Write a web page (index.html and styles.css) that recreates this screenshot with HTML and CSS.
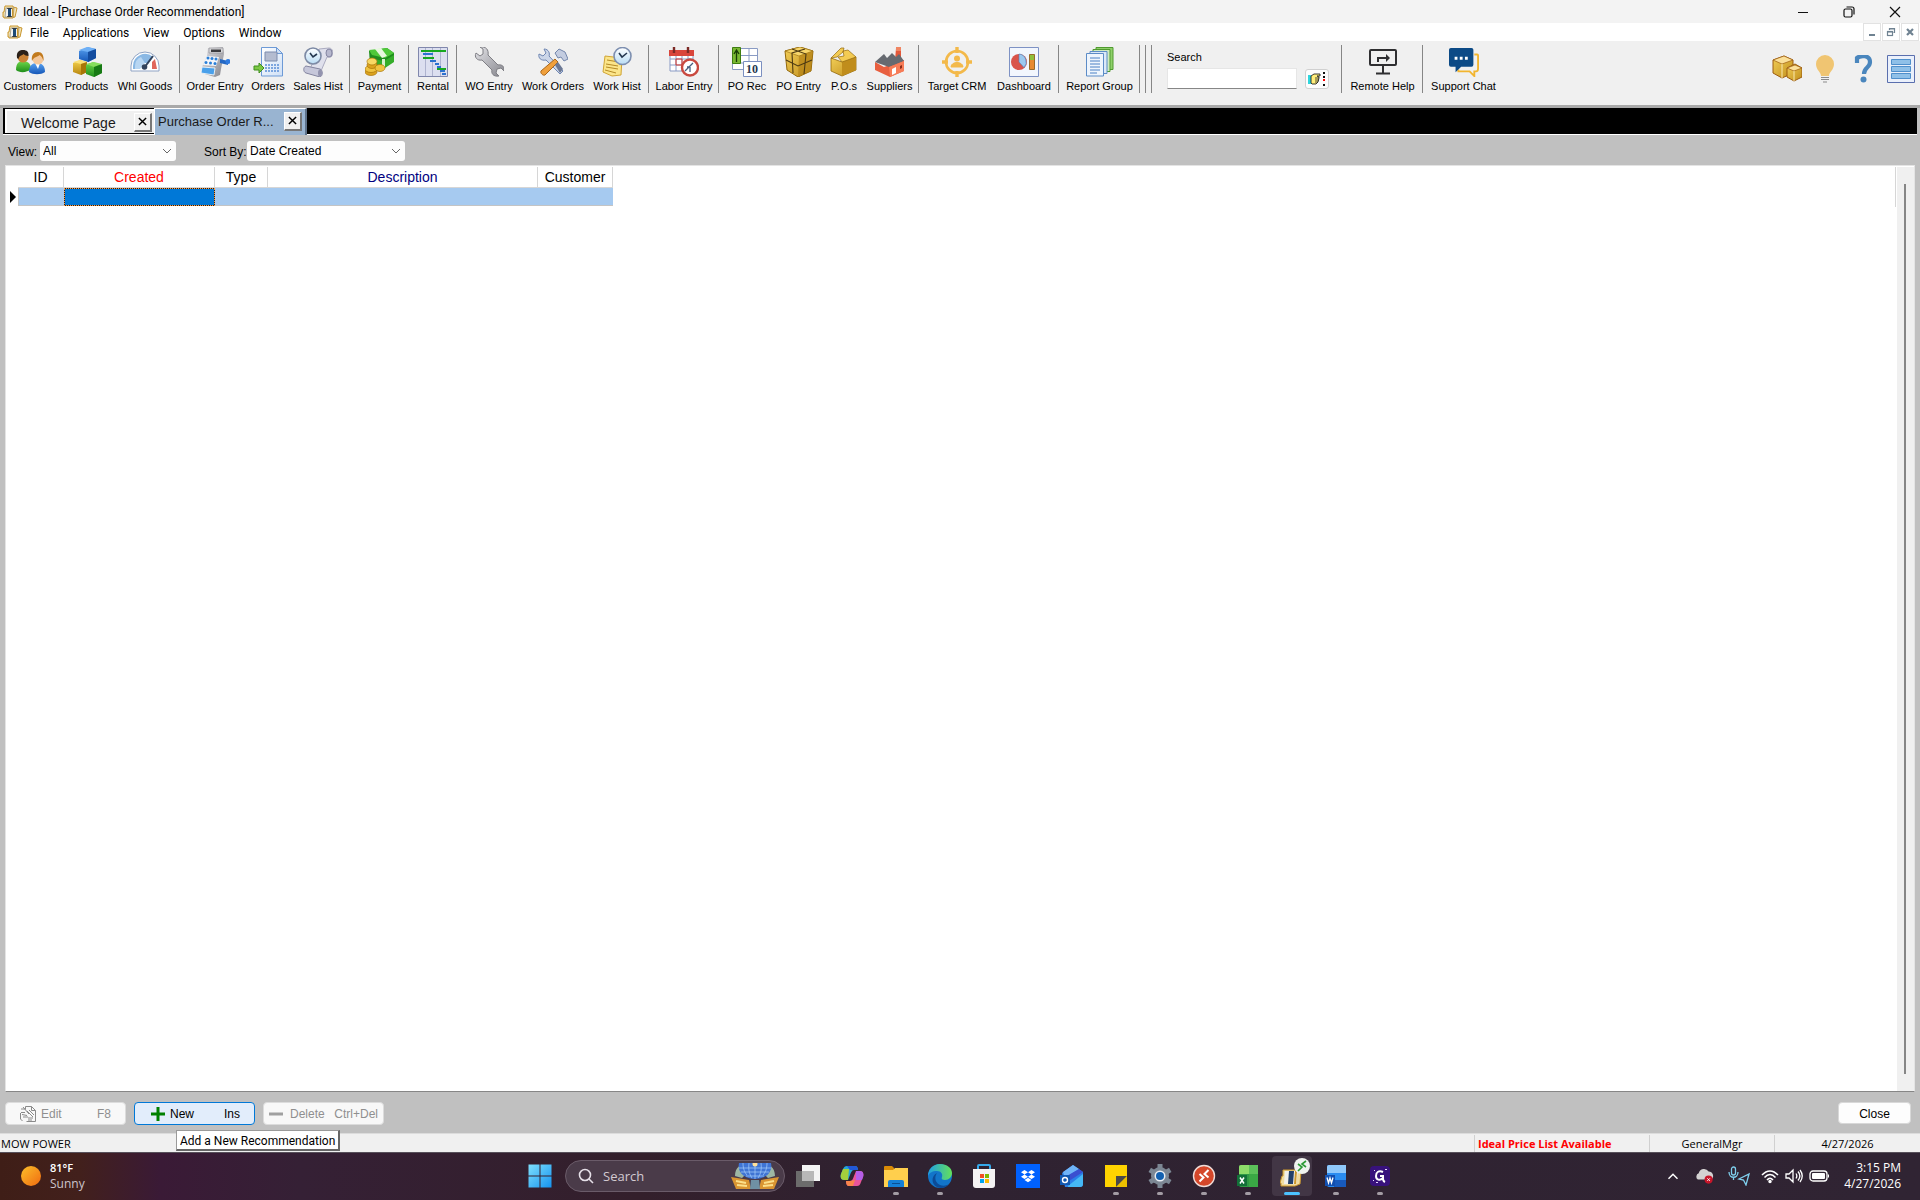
FILE: index.html
```html
<!DOCTYPE html>
<html lang="en">
<head>
<meta charset="utf-8">
<title>Ideal - [Purchase Order Recommendation]</title>
<link rel="stylesheet" href="styles.css">
</head>
<body>
<svg class="defs" aria-hidden="true">
  <defs>
    <linearGradient id="gBlue" x1="0" y1="0" x2="0" y2="1"><stop offset="0" stop-color="#5aa2f0"/><stop offset="1" stop-color="#1557b8"/></linearGradient>
    <linearGradient id="gGreen" x1="0" y1="0" x2="0" y2="1"><stop offset="0" stop-color="#6fd84a"/><stop offset="1" stop-color="#1f8f1c"/></linearGradient>
    <linearGradient id="gGold" x1="0" y1="0" x2="0" y2="1"><stop offset="0" stop-color="#f6d450"/><stop offset="1" stop-color="#b8860f"/></linearGradient>
    <linearGradient id="gSteel" x1="0" y1="0" x2="1" y2="1"><stop offset="0" stop-color="#e4e4e8"/><stop offset="1" stop-color="#85858c"/></linearGradient>
    <linearGradient id="gPage" x1="0" y1="0" x2="1" y2="1"><stop offset="0" stop-color="#ffffff"/><stop offset="1" stop-color="#cfe0f6"/></linearGradient>
    <linearGradient id="gBox" x1="0" y1="0" x2="1" y2="1"><stop offset="0" stop-color="#f3cf58"/><stop offset="1" stop-color="#c08e1c"/></linearGradient>
    <linearGradient id="gSun" x1="0" y1="0" x2="1" y2="1"><stop offset="0" stop-color="#fbc02a"/><stop offset="1" stop-color="#f06a10"/></linearGradient>
    <linearGradient id="gWin" x1="0" y1="0" x2="1" y2="1"><stop offset="0" stop-color="#7fe0fd"/><stop offset="1" stop-color="#1593ef"/></linearGradient>
    <linearGradient id="gEdge" x1="0" y1="0" x2="1" y2="0"><stop offset="0" stop-color="#1f9fe4"/><stop offset="1" stop-color="#63e05a"/></linearGradient>
    <linearGradient id="gFace" x1="0" y1="0" x2="0" y2="1"><stop offset="0" stop-color="#ffffff"/><stop offset="1" stop-color="#b9dcf4"/></linearGradient>
    <symbol id="ideal" viewBox="0 0 16 16">
      <path d="M3 2h8v1l4 1-2 9-2 .5V14H2v-1H1V8h1z" fill="#f3e3b4" stroke="#c8962e"/>
      <path d="M4 4h8l-1 9H3z" fill="#f4f4f0" stroke="#8d8a80" stroke-width=".7"/>
      <path d="M6 4h3v9H6z" fill="#1d4a76"/><path d="M10 4h1.500v9H10z" fill="#c8962e"/>
      <path d="M5 4.500h5M5 12.500h5" stroke="#333" stroke-width=".8"/>
    </symbol>
  </defs>
</svg>

<header class="titlebar">
  <svg class="app-icon" viewBox="0 0 16 16"><use href="#ideal"/></svg>
  <h1>Ideal - [Purchase Order Recommendation]</h1>
  <div class="window-controls">
    <button type="button" aria-label="Minimize"><svg viewBox="0 0 12 12"><path d="M1 6.500h10" stroke="#111"/></svg></button>
    <button type="button" aria-label="Restore"><svg viewBox="0 0 12 12" fill="none" stroke="#111" stroke-width="1.200"><rect x="1" y="3" width="8" height="8" rx="1.500"/><path d="M3.500 1h5.500a2 2 0 0 1 2 2v5.500"/></svg></button>
    <button type="button" aria-label="Close window"><svg viewBox="0 0 12 12"><path d="M1 1l10 10M11 1L1 11" stroke="#111" stroke-width="1.200"/></svg></button>
  </div>
</header>

<nav class="menubar" aria-label="Main menu">
  <svg class="app-icon" viewBox="0 0 16 16"><use href="#ideal"/></svg>
  <button type="button">File</button>
  <button type="button">Applications</button>
  <button type="button">View</button>
  <button type="button">Options</button>
  <button type="button">Window</button>
  <div class="child-controls">
    <button type="button" aria-label="Minimize document"><svg viewBox="0 0 10 10"><path d="M2 8h6" stroke="#6f8291" stroke-width="2"/></svg></button>
    <button type="button" aria-label="Restore document"><svg viewBox="0 0 10 10" fill="none" stroke="#6f8291" stroke-width="1.200"><rect x="1.500" y="4.500" width="5" height="4"/><path d="M1.500 5h5M3.500 3V1.500h5v4H7.500M3.500 2h5"/></svg></button>
    <button type="button" aria-label="Close document"><svg viewBox="0 0 10 10"><path d="M2 2l6 6M8 2L2 8" stroke="#6f8291" stroke-width="2.200"/></svg></button>
  </div>
</nav>

<div class="toolbar" role="toolbar" aria-label="Applications">
  <button type="button" class="tool w60"><svg viewBox="0 0 30 30">
    <path d="M1 23c0-7 3-9 7-9s8 2 8 8c-4 4-12 4-15 1z" fill="url(#gGreen)"/><circle cx="8" cy="10" r="5.500" fill="#c98235"/><path d="M2 11c-1-7 3-8 6-8 4 0 6 2 5.500 6-2 0-4-1-5-2-2 2-4 1-5 5z" fill="#2b2119"/>
    <path d="M14 25c0-6 3-9 8-9s8 3 8 9c-4 3-12 3-16 0z" fill="url(#gBlue)"/><path d="M20 16h5l-2 6z" fill="#fff"/><circle cx="23" cy="12" r="5.500" fill="#f4c79a"/><path d="M17 14c-1-6 2-9 6-9s6 3 5.500 9c-1-3-2-5-4-6-2 2-6 2-7.500 6z" fill="#c27a1d"/></svg><span>Customers</span></button>
  <button type="button" class="tool w53"><svg viewBox="0 0 30 30">
    <path d="M7 4l9-4 8 2v9l-8 4-9-3z" fill="url(#gBlue)"/><path d="M7 3l8-3 9 2-8 3z" fill="#6fb0f6"/><path d="M16 5l8-3v9l-8 4z" fill="#134c9f"/>
    <path d="M1 16l7-3 7 2v10l-6 3-8-3z" fill="url(#gGold)"/><path d="M1 15l7-2 7 2-6 2z" fill="#fbe27a"/><path d="M9 17l6-2v10l-6 3z" fill="#a87608"/>
    <path d="M14 18l7-3 9 3v8l-8 4-8-3z" fill="url(#gGreen)"/><path d="M14 17l8-2 8 2-8 3z" fill="#86dd5c"/><path d="M22 20l8-3v9l-8 4z" fill="#177a14"/></svg><span>Products</span></button>
  <button type="button" class="tool w64"><svg viewBox="0 0 30 30">
    <path d="M1 24v-5a14 14 0 0 1 28 0v5z" fill="#fff" stroke="#8fa3c4"/><path d="M3 22v-3a12 12 0 0 1 20-9l-5 7a5 5 0 0 0-8 3v2z" fill="#8ab8e4"/><path d="M5 22v-3a10 10 0 0 1 6-9l4 6-5 6z" fill="#b8d6f2"/><path d="M22 15l3-3 2 10h-5z" fill="#e0665c"/><path d="M23 9L14 21" stroke="#33435c" stroke-width="2"/><circle cx="14.500" cy="20" r="2.800" fill="#33435c"/></svg><span>Whl Goods</span></button>
  <hr>
  <button type="button" class="tool w64"><svg viewBox="0 0 30 30">
    <path d="M8 1l15-1 1 7-3 15-1 6-5 2L1 26l1-6 5-11z" fill="url(#gSteel)"/><path d="M9 1h14v5H9z" fill="#d7d7da" stroke="#8b8b90" stroke-width=".6"/><path d="M11 2.500h10v2.500H11z" fill="#3b3b3f"/><path d="M7 9l12 1-3 9-13-1z" fill="#f4f6fa"/><g fill="#2a7fd8"><circle cx="8" cy="11" r="1.500"/><circle cx="12" cy="11.500" r="1.500"/><circle cx="16" cy="12" r="1.500"/><circle cx="6" cy="15.500" r="1.500"/><circle cx="10.500" cy="16" r="1.500"/><circle cx="15" cy="16.500" r="1.500"/></g><path d="M2 20l13 1-1 7-13-2z" fill="#4aa0ea" stroke="#fff" stroke-width=".8"/><path d="M20 12l8 2v4l-8-2z" fill="#2468c4"/><circle cx="28" cy="14.500" r="2.500" fill="#2f7be0"/></svg><span>Order Entry</span></button>
  <button type="button" class="tool w42"><svg viewBox="0 0 30 30">
    <path d="M8.500.5h15l6 6v22.500h-21z" fill="url(#gPage)" stroke="#6d9ad6"/><path d="M23.500.5v6h6z" fill="#cfe0f6" stroke="#6d9ad6"/><path d="M12 5h12v9H12z" fill="#b4bcd0" stroke="#7c8cae"/><path d="M12 18h14M12 21h14M12 24h14" stroke="#5b8fd6" stroke-width="1.400" stroke-dasharray="2 1"/><path d="M1 19h5v-3l5 5-5 5v-3H1z" fill="#7cc844" stroke="#3f8f1d"/></svg><span>Orders</span></button>
  <button type="button" class="tool w58"><svg viewBox="0 0 30 30">
    <path d="M16 2l10-1c4 0 5 6 2 9h-4l-6 14H6z" fill="#dfe0ec" stroke="#9a9bb4" stroke-width=".8"/><ellipse cx="26" cy="6" rx="3" ry="4" fill="#b7b8ce" stroke="#8485a2"/><path d="M3 19l14 3c3 1 3 7 0 8L3 26c-3-1-3-6 0-7z" fill="#c6c7da" stroke="#83849f"/><ellipse cx="17" cy="26" rx="2" ry="3.500" fill="#9293ae"/><circle cx="10" cy="9" r="8" fill="url(#gFace)" stroke="#7d8aa5" stroke-width="1.600"/><path d="M7 6l3 4 4-3" fill="none" stroke="#24364e" stroke-width="1.600"/></svg><span>Sales Hist</span></button>
  <hr>
  <button type="button" class="tool w53"><svg viewBox="0 0 30 30">
    <path d="M4 4l18-3 7 5v8l-9 6-15-3z" fill="#1f8d1e"/><path d="M4 3l18-2 7 5-9 5-13-3z" fill="#4fc83a"/><path d="M10 2l6-1 6 8-5 2z" fill="#e8f7df"/><path d="M9 12l10 2 10-6v7l-9 6-11-4z" fill="#35ad2a"/><path d="M17 12h3v8h-3z" fill="#d8f0cd"/><g stroke="#a87408" stroke-width=".7"><ellipse cx="6" cy="25" rx="6" ry="3.500" fill="#dba21d"/><ellipse cx="6" cy="22" rx="6" ry="3.500" fill="#f0c340"/><ellipse cx="7" cy="18" rx="5" ry="3.500" fill="#dba21d"/><ellipse cx="7" cy="14.500" rx="5" ry="3.500" fill="#f8d864"/><ellipse cx="15" cy="21" rx="5" ry="3.500" fill="#f0c340"/></g></svg><span>Payment</span></button>
  <hr>
  <button type="button" class="tool w42"><svg viewBox="0 0 30 30">
    <path d="M.5.5h29v29H.5z" fill="#dcdff0" stroke="#8087ac"/><path d="M7.500 1v28M14.500 1v28M22.500 1v28" stroke="#aeb3cf"/><g stroke-width="2"><path d="M3 4h25M5 11h11M19 22h9" stroke="#17a821"/><path d="M5 7h10M12 14h6M17 17h4M19 20h4M22 24h5M24 27h4" stroke="#2c72cf"/></g></svg><span>Rental</span></button>
  <hr>
  <button type="button" class="tool w58"><svg viewBox="0 0 30 30">
    <path d="M2 6l4 3 3-2V2L6 0c6-1 9 3 8 8l10 10c4-1 7 2 6 6l-3-3-4 1-1 4 3 3c-6 1-8-3-7-6L8 13C3 14 0 10 2 6z" fill="url(#gSteel)" stroke="#7e7e84"/></svg><span>WO Entry</span></button>
  <button type="button" class="tool w70"><svg viewBox="0 0 30 30">
    <path d="M17 6l4-4 6 3 3 7-4 2-3-4-3 1z" fill="#c3cce0" stroke="#7386ab"/><path d="M1 7l4 2 3-3-2-4c5 0 6 5 5 7l14 15-3 3L8 13c-5 1-8-2-7-6z" fill="#ccd6e8" stroke="#6f86b2"/><path d="M17 12l3 3L7 28c-2 1-5-2-4-4z" fill="#f0a03c" stroke="#a9661a"/><path d="M17 18l3-3 5 7-3 4z" fill="#6b7894"/></svg><span>Work Orders</span></button>
  <button type="button" class="tool w58"><svg viewBox="0 0 30 30">
    <path d="M3 9l17 2-1 17-9 1-9-4z" fill="#fbe58a" stroke="#d0a536"/><path d="M5 13l12 2M4 17l12 2M4 20l12 2M3 23l11 3" stroke="#b58a24"/><circle cx="20.500" cy="9" r="8.500" fill="url(#gFace)" stroke="#7d8fb0" stroke-width="1.600"/><path d="M17 6l3 4 5-4" fill="none" stroke="#24364e" stroke-width="1.600"/></svg><span>Work Hist</span></button>
  <hr>
  <button type="button" class="tool w64"><svg viewBox="0 0 30 30">
    <path d="M1 6h23v18H1z" fill="#fff" stroke="#8a9bc4"/><path d="M1 12h23M1 18h23M7 8v16M13 8v16M19 8v16" stroke="#8a9bc4"/><path d="M7 12h6v6H7z" fill="none" stroke="#d8382f"/><path d="M0 3h25v6H0z" fill="#d9463c"/><path d="M5 0v6M19 0v6" stroke="#7c2a26" stroke-width="2.400"/><circle cx="21" cy="20.500" r="8" fill="#fff" stroke="#c9493f" stroke-width="2.400"/><path d="M16 24l8-8M21 20v5M21 20h-3" stroke="#47607f" stroke-width="1.300"/></svg><span>Labor Entry</span></button>
  <hr>
  <button type="button" class="tool w50"><svg viewBox="0 0 30 30">
    <path d="M.5 1.500h25v21H.5z" fill="#fff" stroke="#8a9bc4"/><path d="M9 8.500h17M1 16h24M17 2v20" stroke="#8a9bc4"/><path d="M.5.500h8v16h-8z" fill="#79b833" stroke="#3f7e12"/><path d="M4.500 15V4M2 7l2.500-4L7 7" fill="none" stroke="#183b06" stroke-width="1.300"/><path d="M11.500 14.500h18v15h-18z" fill="#fff" stroke="#7b8fc0"/><text x="14" y="26" class="calendar-day">10</text></svg><span>PO Rec</span></button>
  <button type="button" class="tool w53"><svg viewBox="0 0 30 30">
    <path d="M1 4l15-4 13 4-2 20-13 6L3 23z" fill="url(#gBox)" stroke="#93680b"/><path d="M1 4l14 5 14-5-13-4z" fill="#f7d66b" stroke="#93680b" stroke-width=".6"/><path d="M15 9l-1 21 13-6 2-20z" fill="#b58317" opacity=".7"/><path d="M8 2l14 5-2 20M21 2L8 6l1 20M2 13l12 6 14-6" fill="none" stroke="#4d3a12" stroke-width="1.100"/></svg><span>PO Entry</span></button>
  <button type="button" class="tool w38"><svg viewBox="0 0 30 30">
    <path d="M2 11l11 4 14-5v13l-14 6-11-5z" fill="url(#gBox)" stroke="#93680b" stroke-width=".8"/><path d="M13 15l14-5v13l-14 6z" fill="#c08d1c"/><path d="M2 11L12 1h3l-1 4-6 5zM14 4l5-1 8 7-14 5-4-5 6-1z" fill="#f3cb53" stroke="#93680b" stroke-width=".7"/></svg><span>P.O.s</span></button>
  <button type="button" class="tool w53"><svg viewBox="0 0 30 30">
    <path d="M21 1h5v13h-6z" fill="#e3583a"/><path d="M21 0h5v4h-5z" fill="#f08562"/><path d="M0 15l9 5 20-7v11l-14 6-15-7z" fill="#e85f3f"/><path d="M0 15l9-8 3 4 5-5 4 4 3-3 5 7-15 6z" fill="#666a70"/><path d="M14 20l15-6v10l-14 6z" fill="#f77c57"/><path d="M17 22l4-2v6l-4 2z" fill="#fff"/><path d="M25 19l2-1v3l-2 1z" fill="#8d2c18"/></svg><span>Suppliers</span></button>
  <hr>
  <button type="button" class="tool w70"><svg viewBox="0 0 30 30" fill="none" stroke="#f3b94a">
    <circle cx="15" cy="15" r="11" stroke-width="2.600"/><path d="M15 0v6M15 24v6M0 15h6M24 15h6" stroke-width="3.400"/><circle cx="15" cy="11.500" r="3" fill="#f3b94a" stroke="none"/><path d="M9 20c0-6 12-6 12 0z" fill="#f3b94a"/></svg><span>Target CRM</span></button>
  <button type="button" class="tool w64"><svg viewBox="0 0 30 30">
    <path d="M.5.5h29v29H.5z" fill="#f2f6fd" stroke="#7e92c4"/><circle cx="10" cy="15" r="8" fill="#d9534a"/><path d="M10 15V7a8 8 0 0 1 5 13.500z" fill="#9cc8ef" stroke="#4a80bd" stroke-width=".6"/><path d="M20.500 7.500h5v15h-5z" fill="#e88a32" stroke="#9a6a2a"/><path d="M21 8h4v5h-4z" fill="#8fbf3c"/></svg><span>Dashboard</span></button>
  <hr>
  <button type="button" class="tool w75"><svg viewBox="0 0 30 30">
    <g stroke="#4f9a2f"><path d="M11 .5h17v22H11z" fill="#8fd06a"/><path d="M8 2.500h17v22H8z" fill="#cfeac0"/></g><path d="M5 4.500h17v22H5z" fill="#dce9f8" stroke="#5c8cc7"/><path d="M1.500 6.500h17v22.500h-17z" fill="#eef5fd" stroke="#5c8cc7"/><path d="M5 11h10M5 14h10M5 17h10M5 20h10M5 23h10M5 26h7" stroke="#4a80c4"/></svg><span>Report Group</span></button>
  <hr><hr><hr>
  <form class="quick-search">
    <label for="quick">Search</label>
    <input id="quick" type="text">
    <button type="button" aria-label="Go"><svg viewBox="0 0 18 14"><path d="M0 3h3v9H0z" fill="#2fd6dd"/><path d="M3 4l3-2h6v2h-3l2 1v1l-1 4-2 2H4L3 11z" fill="#ffee7a" stroke="#222" stroke-width=".9"/><path d="M7 6h4M7 8h4M7 10h3" stroke="#222" stroke-width=".8"/><path d="M15 0h2v2h-2zM15 4h2v2h-2zM15 12h2v2h-2z" fill="#111"/><path d="M15 7h2v2h-2z" fill="#f00"/></svg></button>
  </form>
  <hr>
  <button type="button" class="tool w75"><svg viewBox="0 0 30 30" fill="none" stroke="#2f2f31" stroke-width="2">
    <rect x="2" y="3" width="26" height="15" rx="1"/><path d="M15 18v8M8 26.500h14M10 15V11h9" /><path d="M18 7l4 4-4 4z" fill="#2f2f31" stroke="none"/></svg><span>Remote Help</span></button>
  <hr>
  <button type="button" class="tool w75"><svg viewBox="0 0 32 30">
    <path d="M27 7h3c1 0 1 0 1 1v14c0 2-1 3-2 3h-2v5l-5-5H10v-2" fill="none" stroke="#f2b52f" stroke-width="2"/><path d="M2 0h22q2 0 2 2v16q0 2-2 2H13l-6 6v-6H2q-2 0-2-2V2q0-2 2-2z" fill="#0c4a86"/><path d="M6 9.500h3v3H6zM11.500 9.500h3v3h-3zM17 9.500h3v3h-3z" fill="#fff"/></svg><span>Support Chat</span></button>
  <div class="shortcuts">
    <button type="button" aria-label="Packages"><svg viewBox="0 0 30 28"><path d="M1 5l11-4 9 4v13l-11 5-9-5z" fill="url(#gBox)" stroke="#9c5c10"/><path d="M1 5l9 4 11-4-9-4z" fill="#fbe09a" stroke="#9c5c10" stroke-width=".7"/><path d="M10 9v14" stroke="#fbe9b0"/><path d="M15 13l8-4 7 4v9l-8 4-7-4z" fill="url(#gBox)" stroke="#9c5c10"/><path d="M15 13l7 3 8-3-7-3z" fill="#fbe09a" stroke="#9c5c10" stroke-width=".7"/><path d="M22 16v10" stroke="#fbe9b0"/></svg></button>
    <button type="button" aria-label="Tips"><svg viewBox="0 0 30 28"><path d="M11 21c0-4-5-6-5-12a9 9 0 0 1 18 0c0 6-5 8-5 12z" fill="#f0c572"/><path d="M11 22.500h8M11 24.500h8M13 27h4" stroke="#8a8a8a" stroke-width="1.200"/></svg></button>
    <button type="button" aria-label="Help"><svg viewBox="0 0 30 28"><path d="M9 8V3c4-3 13-3 13 4 0 6-6 5-6 12" fill="none" stroke="#4a86bd" stroke-width="4.200"/><circle cx="15.500" cy="24.500" r="3" fill="#4a86bd"/></svg></button>
    <button type="button" aria-label="List"><svg viewBox="0 0 28 28"><path d="M.5.5h27v27H.5z" fill="#eaf0fb" stroke="#5a6fae"/><g fill="#8fc0e8" stroke="#4f8fcb"><path d="M4.500 4.500h19v5h-19zM4.500 11.500h19v5h-19zM4.500 18.500h19v5h-19z"/></g></svg></button>
  </div>
</div>

<div class="tabs" role="tablist">
  <div class="tab"><button type="button" role="tab" aria-selected="false" class="tab-name">Welcome Page</button><button type="button" class="tab-close" aria-label="Close Welcome Page"><svg viewBox="0 0 10 10"><path d="M1 1l8 8M9 1L1 9" stroke="#000" stroke-width="1.600"/></svg></button></div>
  <div class="tab active"><button type="button" role="tab" aria-selected="true" class="tab-name">Purchase Order R...</button><button type="button" class="tab-close" aria-label="Close Purchase Order Recommendation"><svg viewBox="0 0 10 10"><path d="M1 1l8 8M9 1L1 9" stroke="#000" stroke-width="1.600"/></svg></button></div>
</div>

<main>
  <form class="filters">
    <label for="view" class="view-label">View:</label>
    <span class="select view"><select id="view"><option>All</option></select><svg viewBox="0 0 10 6"><path d="M1 1l4 4 4-4" fill="none" stroke="#666"/></svg></span>
    <label for="sort" class="sort-label">Sort By:</label>
    <span class="select sort"><select id="sort"><option>Date Created</option></select><svg viewBox="0 0 10 6"><path d="M1 1l4 4 4-4" fill="none" stroke="#666"/></svg></span>
  </form>

  <section class="grid">
    <table>
      <colgroup><col class="c-mark"><col class="c-id"><col class="c-created"><col class="c-type"><col class="c-desc"><col class="c-cust"></colgroup>
      <thead><tr><td></td><th>ID</th><th class="red">Created</th><th>Type</th><th class="navy">Description</th><th>Customer</th></tr></thead>
      <tbody><tr><td class="mark"><svg viewBox="0 0 6 12"><path d="M0 0l6 6-6 6z"/></svg></td><td></td><td class="focus"></td><td></td><td></td><td></td></tr></tbody>
    </table>
    <div class="scroll-edge"></div>
    <div class="scrollbar"><div class="thumb"></div></div>
  </section>

  <div class="actions">
    <button type="button" class="action" disabled><svg viewBox="0 0 16 16" fill="none" stroke="#8a8a8a"><path d="M5.500 3V.5h6l4 4v11h-9M11.500.5v4h4M1 6.500h4M.5 7v6l2 2M2 8.500l5 1M3 11h5M7 5l6 6M9 4l5 5M8 12h5M8 14h4M3 1l6 7M1 3h5"/></svg><span>Edit</span><kbd>F8</kbd></button>
    <div class="action-wrap">
      <button type="button" class="action hot" aria-describedby="tip"><svg viewBox="0 0 14 14"><path d="M7 0v14M0 7h14" stroke="#008000" stroke-width="3"/></svg><span>New</span><kbd>Ins</kbd></button>
      <div class="tooltip" id="tip" role="tooltip">Add a New Recommendation</div>
    </div>
    <button type="button" class="action wide" disabled><svg viewBox="0 0 14 14"><path d="M0 7h14" stroke="#a0a0a0" stroke-width="3"/></svg><span>Delete</span><kbd>Ctrl+Del</kbd></button>
    <button type="button" class="close">Close</button>
  </div>
</main>

<footer class="status">
  <span class="company">MOW POWER</span>
  <span class="notice">Ideal Price List Available</span>
  <span class="user">GeneralMgr</span>
  <span class="date">4/27/2026</span>
</footer>

<nav class="taskbar" aria-label="Taskbar">
  <button type="button" class="weather"><svg viewBox="0 0 20 20"><circle cx="10" cy="10" r="10" fill="url(#gSun)"/></svg><span><b>81°F</b><small>Sunny</small></span></button>
  <div class="apps">
    <button type="button" class="app" aria-label="Start"><svg viewBox="0 0 24 24" fill="url(#gWin)"><path d="M.5.5h11v11H.5zM12.500.5h11v11h-11zM.5 12.500h11v11H.5zM12.500 12.500h11v11h-11z"/></svg></button>
    <label class="search"><svg viewBox="0 0 16 16" fill="none" stroke="#e6e0e8" stroke-width="1.600"><circle cx="7" cy="7" r="5.500"/><path d="M11 11l4 4"/></svg><input type="text" placeholder="Search" aria-label="Search">
      <svg class="art" viewBox="0 0 48 26"><path d="M4 13C4 4 10 1 16 0l-2 12-3 3zM44 13C44 4 38 1 32 0l2 12 3 3z" fill="#9db7a4"/><path d="M8 0h32c2 10-6 16-16 16S6 10 8 0z" fill="#3f74d4"/><path d="M8 5h32M10 9h28M15 13h18M24 0v16M18 0c-1 8 1 12 3 15M30 0c1 8-1 12-3 15M12 0c0 6 2 10 4 12M36 0c0 6-2 10-4 12" fill="none" stroke="#a8d0fa" stroke-width=".7"/><circle cx="24" cy="1" r="2.500" fill="#ffe09a"/><path d="M0 14l6 1 12 2 2 9H5z" fill="#d99532"/><path d="M48 14l-6 1-12 2-2 9h15z" fill="#d99532"/><path d="M5 18l10 2M6 22l10 1M43 18l-10 2M42 22l-10 1" stroke="#fbe08a" stroke-width="2"/><path d="M20 17h8l1 9H19z" fill="#6f90a4"/></svg></label>
    <button type="button" class="app" aria-label="Task view"><svg viewBox="0 0 24 24"><path d="M6 1h18v16H6z" fill="#f4f4f4"/><path d="M0 7h18v16H0z" fill="#6c6c6c"/><path d="M6 7h12v10H6z" fill="#b8b8b8"/></svg></button>
    <button type="button" class="app" aria-label="Copilot"><svg viewBox="0 0 24 24"><path d="M7 2h8c2 0 3 2 3 4h-4c-2 0-3 2-4 5l-2 5H4c-3 0-4-3-3-6l2-5c1-2 2-3 4-3z" fill="#23a6d8"/><path d="M1 10l2-5h6L8 16H4c-3 0-4-3-3-6z" fill="#a4cf3c"/><path d="M7 2h8c2 0 3 2 3 4h-8z" fill="#2158d8"/><path d="M16 7h4c3 0 4 3 3 6l-2 5c-1 3-2 4-4 4H9c-2 0-3-2-3-5h4c2 0 3-2 4-5z" fill="#e8549a"/><path d="M16 7h4c3 0 4 3 3 6l-1 3h-6z" fill="#b45ee8"/><path d="M6 17h4l5-1-2 6H9c-2 0-3-2-3-5z" fill="#f9854a"/></svg></button>
    <button type="button" class="app open" aria-label="File Explorer"><svg viewBox="0 0 24 24"><path d="M0 3q0-1 1-1h7l2 2v4H0z" fill="#d98a06"/><path d="M0 6h9l2-2h13v19H0z" fill="#ffcf4d"/><path d="M4 23v-5q0-2 2-2h12q2 0 2 2v5z" fill="#1580d6"/><path d="M8 19h8v1H8z" fill="#0a4f92"/></svg></button>
    <button type="button" class="app open" aria-label="Edge"><svg viewBox="0 0 24 24"><circle cx="12" cy="12" r="12" fill="#1275c9"/><path d="M0 12C0 5 5 0 12 0s12 4 12 9c0 4-3 7-7 7-3 0-4-1-3-3 1-3-1-6-5-6-5 0-8 2-9 5z" fill="url(#gEdge)"/><path d="M9 9c-3 4-2 10 3 12 3 1 6 1 9-1-3 4-8 5-12 3-6-3-6-11 0-14z" fill="#0c4b96"/></svg></button>
    <button type="button" class="app" aria-label="Store"><svg viewBox="0 0 24 24"><path d="M6 6V2q0-1 1-1h10q1 0 1 1v4" fill="none" stroke="#35a8ea" stroke-width="2"/><path d="M1 5h22v16q0 3-3 3H4q-3 0-3-3z" fill="#f4f2f3"/><path d="M8 10h4v4H8z" fill="#f25022"/><path d="M13 10h4v4h-4z" fill="#7fba00"/><path d="M8 15h4v4H8z" fill="#00a4ef"/><path d="M13 15h4v4h-4z" fill="#ffb900"/></svg></button>
    <button type="button" class="app" aria-label="Dropbox"><svg viewBox="0 0 24 24"><path d="M0 0h24v24H0z" fill="#0061fe"/><path d="M8.500 6l3.500 2.200-3.500 2.300L5 8.200zM15.500 6L19 8.200l-3.500 2.300L12 8.200zM8.500 10.500L12 12.800 8.500 15 5 12.800zM15.500 10.500l3.500 2.300-3.500 2.200-3.500-2.200zM12 13.800l3.500 2.200-3.500 2.200L8.500 16z" fill="#fff"/></svg></button>
    <button type="button" class="app" aria-label="Outlook"><svg viewBox="0 0 24 24"><path d="M2 9L13 1l10 7v12q0 3-3 3H5z" fill="#2a7fe8"/><path d="M3 8L13 1l6 4-14 9z" fill="#6fb4f8"/><path d="M5 13L19 5l4 3-14 9z" fill="#3a4fd0"/><path d="M8 22l15-12v10q0 3-3 3H8z" fill="#45b8f5"/><path d="M0 11h10v10H0z" fill="#1258b0"/><circle cx="5" cy="16" r="2.500" fill="none" stroke="#fff" stroke-width="1.400"/></svg></button>
    <button type="button" class="app open" aria-label="Sticky Notes"><svg viewBox="0 0 24 24"><path d="M1 1h22v11L12 23H1z" fill="#ffd400"/><path d="M12 12h11L12 23z" fill="#4a4a4a"/><path d="M23 12L12 23h11z" fill="#ecc100"/></svg></button>
    <button type="button" class="app open" aria-label="Settings"><svg viewBox="0 0 24 24"><g fill="#7c8794"><circle cx="12" cy="12" r="9"/><path d="M9.500 0h5v24h-5zM.5 7.900L3 3.700l20.500 12.400-2.500 4.200zM3 20.300L.5 16.100 21 3.700l2.500 4.200z"/></g><circle cx="12" cy="12" r="5.500" fill="#e8eef4"/><circle cx="12" cy="12" r="4" fill="#1260b0"/></svg></button>
    <button type="button" class="app open" aria-label="Remote Desktop"><svg viewBox="0 0 24 24"><circle cx="12" cy="12" r="10.500" fill="#d5472a" stroke="#efdcd8" stroke-width="1.400"/><path d="M7.500 10l4 3.500-4 4M16.500 6l-4 4 4 3.500" fill="none" stroke="#fff" stroke-width="2"/></svg></button>
    <button type="button" class="app open" aria-label="Excel"><svg viewBox="0 0 24 24"><path d="M3 3q0-2 2-2h17v22H5q-2 0-2-2z" fill="#2f9a45"/><path d="M3 3q0-2 2-2h8v9H3z" fill="#8edc6a"/><path d="M13 1h9v9h-9z" fill="#5cc05a"/><path d="M13 10h9v13h-9z" fill="#3aa845"/><path d="M1 11h10v11H1z" fill="#127038"/><path d="M4 13.500l4 6M8 13.500l-4 6" stroke="#fff" stroke-width="1.500"/></svg></button>
    <button type="button" class="app open current" aria-label="Ideal"><svg viewBox="0 0 24 24"><path d="M3 6h13l5 1-1 13-5 2H1v-3H0l2-7h1z" fill="#f0dca0" stroke="#cc982c"/><path d="M5 7h13l-2 13H4z" fill="#f2f0ea"/><path d="M9 7h5l-1 13H8z" fill="#23406a"/><path d="M15 7h2l-1 13h-2z" fill="#cc982c"/></svg><svg class="badge" viewBox="0 0 16 16"><circle cx="8" cy="8" r="8" fill="#f0f3ef"/><path d="M4 6l4 3-4 4M12 3L8 6l4 3" fill="none" stroke="#2c9a34" stroke-width="1.600"/></svg></button>
    <button type="button" class="app open" aria-label="Word"><svg viewBox="0 0 24 24"><path d="M3 3q0-2 2-2h17v22H5q-2 0-2-2z" fill="#2a8cf0"/><path d="M3 3q0-2 2-2h17v8H3z" fill="#8fc8fb"/><path d="M10 16h12v7H10z" fill="#185abd"/><path d="M1 11h10v11H1z" fill="#124fb0"/><path d="M3 13.500l1.500 5.500L6 14l1.500 5L9 13.500" fill="none" stroke="#fff" stroke-width="1.300"/></svg></button>
    <button type="button" class="app open" aria-label="Assistant"><svg viewBox="0 0 24 24"><rect x="2" y="2" width="20" height="20" rx="4" fill="#38127c"/><path d="M15 8c-4-2-7 0-7 4s4 5 7 2v-2h-3m3 0c0 4 0 5 2 6" fill="none" stroke="#fff" stroke-width="2"/><path d="M6 6h1v1H6zM17 5h2v1h-2zM5 16h1v1H5zM8 18h2v1H8z" fill="#e6d8ff"/></svg></button>
  </div>
  <div class="tray">
    <button type="button" aria-label="Show hidden icons"><svg viewBox="0 0 20 20"><path d="M5 13l5-5 5 5" fill="none" stroke="#fff" stroke-width="1.600"/></svg></button>
    <button type="button" aria-label="OneDrive"><svg viewBox="0 0 20 20"><path d="M2 14a4 4 0 0 1 1-7 6 6 0 0 1 11-2 5 5 0 0 1 3 9z" fill="#d4d2d2"/><circle cx="14" cy="14" r="4.500" fill="#c8162a"/><path d="M12.500 12.500l3 3M15.500 12.500l-3 3" stroke="#fff"/></svg></button>
    <button type="button" class="duo" aria-label="Microphone and location"><svg viewBox="0 0 22 20" fill="none" stroke="#7fd0ee" stroke-width="1.300"><rect x="3.500" y="1" width="4" height="8" rx="2"/><path d="M1 6c0 7 9 7 9 0M5.500 11.500V14M21 8l-3 11-2.500-5-4.500-1z"/></svg></button>
    <button type="button" aria-label="Network, sound and battery" class="system">
      <svg viewBox="0 0 18 18" fill="none" stroke="#fff" stroke-width="1.500"><path d="M1 8c5-5.500 11-5.500 16 0M3.500 10.500c3.500-4 7.500-4 11 0M6 13c2-2.500 4-2.500 6 0"/><circle cx="9" cy="14.500" r="1" fill="#fff"/></svg>
      <svg viewBox="0 0 18 18" fill="none" stroke="#fff" stroke-width="1.300"><path d="M1 7v4h3l4 4V3L4 7zM11 6.500c1 1.500 1 3.500 0 5M13 4.500c2.500 3 2.500 6 0 9M15 3c3 4 3 8 0 12"/></svg>
      <svg class="battery" viewBox="0 0 20 18"><rect x="1" y="4" width="17" height="10" rx="3" fill="none" stroke="#fff" stroke-width="1.300"/><rect x="3" y="6" width="13" height="6" rx="1" fill="#fff"/><path d="M19.500 7.500v3" stroke="#fff"/></svg>
    </button>
    <button type="button" class="clock"><time>3:15 PM</time><time>4/27/2026</time></button>
  </div>
</nav>
</body>
</html>
```
FILE: styles.css
```css
* { box-sizing: border-box; }
html, body { height: 100%; }
body {
  margin: 0;
  display: flex;
  flex-direction: column;
  background: #c0c0c0;
  color: #000;
  font: 12px/16px "Liberation Sans", Arial, sans-serif;
  overflow: hidden;
}
button, input, select { font: inherit; color: inherit; margin: 0; }
button { display: flex; align-items: center; justify-content: center; padding: 0; border: 0; background: none; white-space: nowrap; }
svg { flex: none; }
.defs { position: absolute; width: 0; height: 0; }

/* title bar and menu */
.titlebar, .menubar { font-family: Roboto, "Noto Sans", sans-serif; }
.titlebar { flex: none; display: flex; align-items: center; height: 23px; padding-left: 2px; background: #f3f3f3; }
.titlebar h1 { margin: 0 0 0 5px; font-size: 12px; font-weight: 400; line-height: 16px; }
.app-icon { width: 16px; height: 16px; }
.window-controls { display: flex; margin-left: auto; padding-right: 2px; }
.window-controls button { width: 46px; height: 23px; }
.window-controls svg { width: 12px; height: 12px; }
.menubar { flex: none; display: flex; align-items: center; height: 18px; padding-left: 7px; background: #fff; }
.menubar > button { padding: 2px 7px 0; }
.child-controls { display: flex; gap: 1px; margin-left: auto; padding-right: 1px; }
.child-controls button { width: 18px; height: 18px; border: 1px solid #e2e2e2; }
.child-controls svg { width: 10px; height: 10px; }

/* toolbar */
.toolbar { flex: none; display: flex; align-items: flex-start; height: 67px; padding-top: 4px; background: #f0f0f0; border-bottom: 3px solid #a9a9a9; font-size: 11px; }
.tool { flex: none; flex-direction: column; justify-content: flex-start; gap: 1px; height: 50px; padding-top: 2px; }
.tool svg { width: 30px; height: 30px; }
.w38 { width: 38px; } .w42 { width: 42px; } .w50 { width: 50px; } .w53 { width: 53px; } .w58 { width: 58px; }
.w60 { width: 60px; } .w64 { width: 64px; } .w70 { width: 70px; } .w75 { width: 75px; }
.toolbar hr { flex: none; width: 1px; height: 48px; margin: 0 3px 0 2px; border: 0; background: #868686; }
.calendar-day { font: bold 12px "Liberation Serif", serif; fill: #26364e; }
.quick-search { display: grid; grid-template-columns: 130px 24px; gap: 3px 8px; padding: 4px 10px 0 12px; }
.quick-search label { grid-column: 1 / -1; }
.quick-search input { width: 100%; height: 21px; border: 1px solid #e6e6e6; border-bottom-color: #868686; background: #fff; }
.quick-search button { height: 20px; margin-top: 1px; border: 1px solid #d0d0d0; border-radius: 3px; background: #fdfdfd; }
.quick-search button svg { width: 18px; height: 14px; }
.shortcuts { display: flex; gap: 8px; margin-left: auto; padding: 10px 4px 0 0; }
.shortcuts svg { width: 30px; height: 28px; }

/* document tabs */
.tabs { flex: none; display: flex; align-items: flex-end; height: 27px; margin: 0 3px; padding-left: 2px; background: #000; border-bottom: 1px solid #fff; font-size: 14px; }
.tab { display: flex; align-items: center; width: 149px; height: 24px; padding-right: 2px; background: #f0f0f0; border: solid #fff; border-width: 2px 0 0 2px; margin-bottom: 1px; }
.tab-name { flex: 1; justify-content: flex-start; padding: 2px 0 0 14px; color: #1a1a1a; }
.tab-close { width: 18px; height: 19px; background: #f0f0f0; border: 1px solid #fff; border-right: 2px solid #777; border-bottom: 2px solid #777; }
.tab-close svg { width: 9px; height: 9px; }
.tab.active { width: 153px; height: 27px; margin-bottom: -1px; padding: 0 3px 2px 0; background: #99b4d1; border-width: 1px 0 0 1px; font-size: 13px; border-right: 2px solid #5f7289; }
.tab.active .tab-name { padding-left: 3px; }

/* filters */
main { flex: 1; display: flex; flex-direction: column; min-height: 0; background: #c0c0c0; }
.filters { flex: none; display: flex; align-items: center; height: 30px; padding: 1px 0 0 8px; }
.filters label { padding-top: 2px; }
.view-label { width: 32px; }
.sort-label { width: 43px; white-space: nowrap; }
.select { display: grid; align-items: center; height: 20px; }
.select > * { grid-area: 1 / 1; }
.select svg { width: 10px; height: 6px; justify-self: end; margin-right: 4px; pointer-events: none; }
.select select { appearance: none; width: 100%; height: 20px; padding: 0 3px; border: 0; border-radius: 3px; background: #fdfdfd; }
.view { width: 136px; margin-right: 28px; }
.sort { width: 158px; }

/* record grid */
.grid { flex: 1; display: flex; min-height: 0; margin: 0 5px; padding-top: 1px; background: #fff; border: 1px solid #e4e4e4; border-bottom-color: #868686; }
table { border-collapse: separate; border-spacing: 0; table-layout: fixed; width: 607px; height: 39px; font-size: 14px; }
th { font-weight: normal; }
th, td { padding: 0; height: 18px; line-height: 17px; }
th { height: 21px; border: solid #d6d6d6; border-width: 0 1px 1px 0; }
tbody td + td { background: #a6caf0; border-bottom: 1px solid #c4c4c4; }
tbody td:nth-child(2) { border-left: 1px solid #c4c4c4; }
tbody td.focus { background: linear-gradient(#0078d7, #0078d7) padding-box, #26221e border-box; border: 1px dotted #ff9a3c; }
.mark svg { display: block; width: 6px; height: 12px; margin-left: 4px; }
.c-mark { width: 12px; } .c-id { width: 46px; } .c-created { width: 151px; } .c-type { width: 53px; } .c-desc { width: 270px; } .c-cust { width: 75px; }
.red { color: #f00; } .navy { color: #000080; }
.scroll-edge { width: 1px; height: 40px; margin-left: auto; background: #d6d6d6; }
.scrollbar { display: flex; justify-content: center; width: 17px; margin-left: 1px; padding: 17px 2px 17px 0; background: #f0f0f0; }
.thumb { width: 2px; background: #868686; }

/* action buttons */
.actions { flex: none; display: flex; align-items: center; gap: 8px; height: 41px; padding: 1px 9px 0 5px; }
.action { display: grid; grid-template-columns: 16px 1fr auto; align-items: center; gap: 5px; width: 121px; height: 23px; padding: 2px 14px 0; text-align: left; border: 1px solid #dcdcdc; border-radius: 4px; background: #f8f8f8; }
.action:disabled { color: #8f8f8f; }
.action svg { width: 16px; height: 16px; }
.action kbd { font: inherit; }
.action.hot { border-color: #0078d7; background: #e2edfb; }
.action.hot svg, .action.wide svg { width: 14px; height: 14px; }
.action.hot svg { justify-self: end; }
.action.wide { padding: 2px 5px 0; }
.action-wrap { position: relative; }
.tooltip { position: absolute; left: 42px; top: 28px; z-index: 2; height: 21px; padding: 2px 3px 0; background: #fff; border: solid #9a9a9a; border-width: 1px 2px 2px 1px; border-right-color: #666; border-bottom-color: #666; font-family: Roboto, "Noto Sans", sans-serif; white-space: nowrap; }
.close { width: 73px; height: 22px; margin-left: auto; padding-top: 2px; border: 1px solid #d8d8d8; border-radius: 4px; background: #fdfdfd; }

/* status bar */
.status { flex: none; display: flex; align-items: stretch; height: 19px; border-top: 1px solid #dcdcdc; background: #f0f0f0; font: 11px/18px "Open Sans", "Noto Sans", sans-serif; }
.status span { margin-top: 1px; }
.company { flex: 1; padding-left: 1px; }
.notice { width: 175px; padding-left: 3px; color: #f00; font-weight: bold; border-left: 1px solid #d0d0d0; }
.user { width: 125px; text-align: center; border-left: 1px solid #d0d0d0; }
.date { width: 146px; text-align: center; border-left: 1px solid #d0d0d0; }

/* taskbar */
.taskbar { flex: none; display: grid; grid-template-columns: 1fr auto 1fr; height: 48px; padding-bottom: 2px; border-top: 1px solid #57505a; background: linear-gradient(90deg, #3f1e17 0, #42201c 80px, #3a1a36 160px, #352035 300px, #331f2b 640px, #2f2231 900px, #302433 100%); color: #fff; font: 12px/16px "Open Sans", "Noto Sans", sans-serif; }
.weather { justify-self: start; gap: 9px; padding-left: 21px; text-align: left; }
.weather svg { width: 20px; height: 20px; }
.weather b, .weather small { display: block; font-size: 11px; line-height: 16px; font-weight: 600; }
.weather small { font-size: 12px; font-weight: 400; color: #cdc5cc; }
.apps { display: flex; align-items: center; }
.app { position: relative; width: 44px; height: 45px; }
.app svg { width: 24px; height: 24px; }
.app.open::after { content: ""; position: absolute; left: 19px; bottom: 3px; width: 6px; height: 3px; border-radius: 2px; background: #a39ca4; }
.app.current { background: #423645; height: 40px; width: 40px; margin: 0 2px; border-radius: 4px; }
.app.current::after { left: 12px; width: 16px; bottom: 1px; background: #4cc2ff; }
.app .badge { position: absolute; right: 2px; top: 2px; width: 16px; height: 16px; }
.search { display: flex; align-items: center; gap: 9px; width: 220px; height: 32px; margin: 0 1px 0 3px; padding: 0 5px 0 12px; border: 1px solid #6a5b69; border-radius: 16px; background: #4a3b49; }
.search > svg { width: 16px; height: 16px; }
.search input { flex: 1; min-width: 0; padding: 0; border: 0; background: none; color: #fff; font-size: 13px; outline: 0; }
.search input::placeholder { color: #d2cad1; opacity: 1; }
.search .art { width: 48px; height: 26px; }
.tray { justify-self: end; display: flex; align-items: center; padding-right: 19px; }
.tray > button { width: 32px; height: 40px; }
.tray > button svg { width: 18px; height: 18px; }
.tray > .duo { margin-left: 2px; }
.tray > .duo svg { width: 22px; height: 20px; }
.tray > .system { width: 80px; gap: 6px; }
.tray > .system .battery { width: 20px; }
.tray > .clock { width: auto; min-width: 66px; flex-direction: column; align-items: flex-end; }
```
